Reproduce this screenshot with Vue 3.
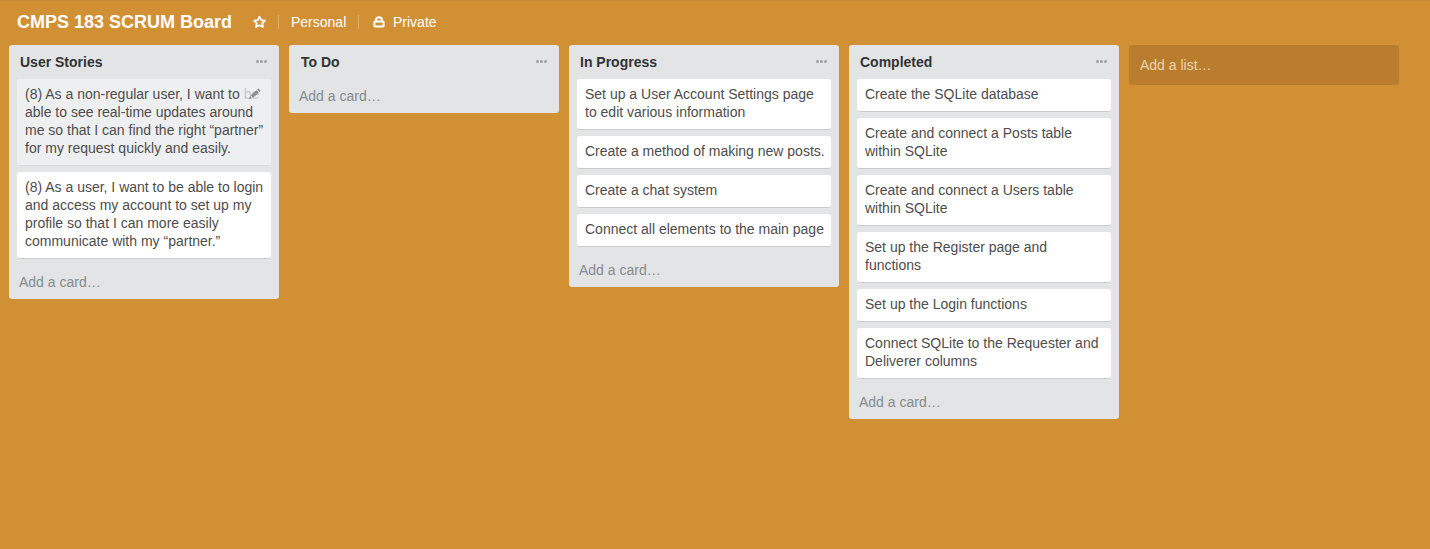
<script setup>
const lists = [
  {
    title: 'User Stories',
    cards: [
      { lines: ['(8) As a non-regular user, I want to be', 'able to see real-time updates around', 'me so that I can find the right “partner”', 'for my request quickly and easily.'], active: true },
      { lines: ['(8) As a user, I want to be able to login', 'and access my account to set up my', 'profile so that I can more easily', 'communicate with my “partner.”'] },
    ],
  },
  { title: 'To Do', nudge: true, cards: [] },
  {
    title: 'In Progress',
    cards: [
      { lines: ['Set up a User Account Settings page', 'to edit various information'] },
      { lines: ['Create a method of making new posts.'] },
      { lines: ['Create a chat system'] },
      { lines: ['Connect all elements to the main page'] },
    ],
  },
  {
    title: 'Completed',
    cards: [
      { lines: ['Create the SQLite database'] },
      { lines: ['Create and connect a Posts table', 'within SQLite'] },
      { lines: ['Create and connect a Users table', 'within SQLite'] },
      { lines: ['Set up the Register page and', 'functions'] },
      { lines: ['Set up the Login functions'] },
      { lines: ['Connect SQLite to the Requester and', 'Deliverer columns'] },
    ],
  },
]
</script>

<template>
  <main class="board">
    <header class="bar">
      <h1>CMPS 183 SCRUM Board</h1>
      <svg class="star" width="14" height="14" viewBox="0 0 14 14">
        <path d="M7.5 1.7 9.2 5.1 13 5.6 10.3 8.2 10.9 12 7.5 10.3 4.1 12 4.7 8.2 2 5.6 5.8 5.1Z" />
      </svg>
      <i class="sep"></i>
      <span class="team">Personal</span>
      <i class="sep"></i>
      <svg class="lock" width="12" height="12" viewBox="0 0 12 12">
        <rect x="1.4" y="5.4" width="9.2" height="5" rx=".6" />
        <path d="M3 5.2V4.2a3 3 0 0 1 6 0V5.2" />
      </svg>
      <span>Private</span>
    </header>
    <div class="lists">
      <section v-for="list in lists" :key="list.title" class="list">
        <div class="head">
          <h2 :class="{ nudge: list.nudge }">{{ list.title }}</h2>
          <span class="dots"><i></i><i></i><i></i></span>
        </div>
        <article v-for="card in list.cards" :key="card.lines[0]" class="card" :class="{ active: card.active }">
          <div v-for="line in card.lines" :key="line">{{ line }}</div>
          <span v-if="card.active" class="edit">
            <svg width="12" height="12" viewBox="0 0 12 12">
              <path d="M0 11.2 1.2 8.2 3.2 10.2ZM1.8 7.4 7.4 2.2 9.8 4.6 4 9.8ZM8.2 1.5 9.4.5 11.7 2.8 10.5 4Z" />
            </svg>
          </span>
        </article>
        <div class="add">Add a card…</div>
      </section>
      <div class="new-list">Add a list…</div>
    </div>
  </main>
</template>

<style>
body { background: #d29034; }
</style>

<style scoped>
.board {
  box-sizing: border-box;
  height: 549px;
  overflow: hidden;
  background: #d29034;
  border-top: 1px solid #c78931;
  font: 14px/18px "Liberation Sans", Arial, sans-serif;
  color: #4d4d4d;
}
.bar {
  display: flex;
  align-items: center;
  height: 44px;
  padding: 0 0 2px 17px;
  box-sizing: border-box;
  color: #fff;
}
h1 { margin: 0; width: 235px; font-size: 18px; line-height: 22px; white-space: nowrap; }
.star, .lock { fill: none; stroke: #fff; stroke-width: 2; stroke-linejoin: round; flex: none; }
.star { stroke-width: 1.8; }
.sep { width: 1px; height: 14px; background: #dfb069; margin: 0 12px; }
.team { width: 55px; }
.lock { margin: 0 8px 1px 2px; }
.lists { display: flex; align-items: flex-start; gap: 10px; padding-left: 9px; }
.list { width: 270px; background: #e2e4e6; border-radius: 3px; }
.head { display: flex; justify-content: space-between; height: 34px; box-sizing: border-box; padding: 8px 12px 0 11px; }
h2 { margin: 0; font-size: 14px; line-height: 18px; color: #333; }
h2.nudge { padding-left: 1px; }
.dots { display: flex; gap: 1px; padding-top: 7px; }
.dots i { width: 3px; height: 3px; border-radius: 50%; background: #a0a3a6; }
.card {
  position: relative;
  margin: 0 8px 6px;
  padding: 6px 0 8px 8px;
  background: #fff;
  border-bottom: 1px solid #ccc;
  border-radius: 3px;
  white-space: nowrap;
}
.card.active { background: #edeff0; border-bottom-color: #d6dadc; }
.edit {
  position: absolute;
  top: 6px;
  right: 8px;
  width: 20px;
  height: 18px;
  background: rgba(237, 239, 240, 0.75);
}
.edit svg { position: absolute; left: 6px; top: 3px; fill: #8c8c8c; }
.add { height: 34px; line-height: 34px; padding-left: 10px; color: #838c91; }
.new-list {
  width: 270px;
  height: 40px;
  box-sizing: border-box;
  padding-left: 11px;
  line-height: 40px;
  border-radius: 3px;
  background: #b97d2d;
  color: #ecd3b1;
}
</style>
